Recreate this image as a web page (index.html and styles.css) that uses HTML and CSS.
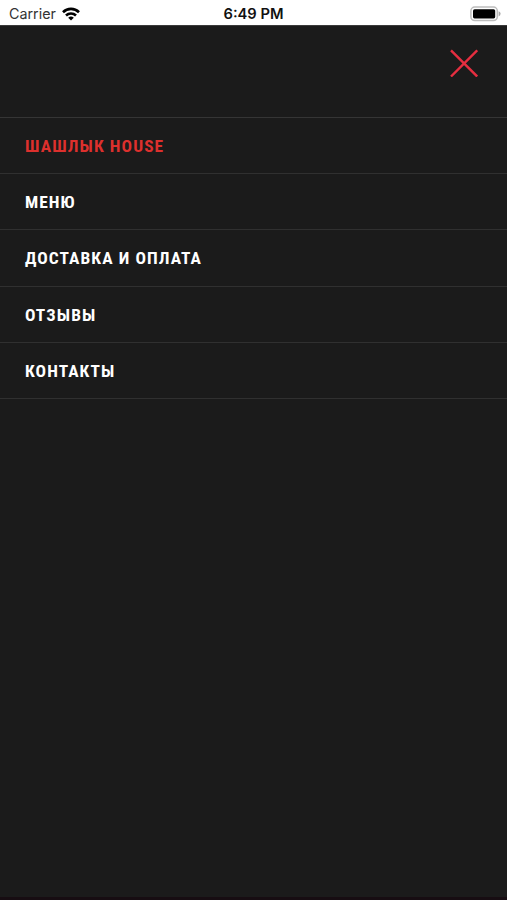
FILE: index.html
```html
<!DOCTYPE html>
<html lang="ru">
<head>
    <meta charset="UTF-8">
    <meta name="viewport" content="width=device-width, initial-scale=1.0">
    <title>Шашлык House</title>
    <link rel="stylesheet" href="styles.css">
</head>
<body>
    <div class="status-bar">
        <div class="carrier">
            <span>Carrier</span>
            <svg class="wifi" width="18" height="14" viewBox="0 0 18 14">
                <g fill="none" stroke="#000" stroke-width="2.6">
                    <path d="M1 5.2 A11.4 11.4 0 0 1 17 5.2"/>
                    <path d="M4 8.5 A7.2 7.2 0 0 1 14 8.5"/>
                </g>
                <path d="M9 13.6 L6.2 10.7 A4.2 4.2 0 0 1 11.8 10.7 Z"/>
            </svg>
        </div>
        <div class="time">6:49 PM</div>
        <div class="battery">
            <svg width="31" height="16" viewBox="0 0 31 16">
                <rect x="0.9" y="1.1" width="26.4" height="13.4" rx="3.8" fill="#fff" stroke="#bdbdbd" stroke-width="1.5"/>
                <rect x="3" y="3.2" width="22.2" height="9.2" rx="1.6" fill="#000"/>
                <path d="M28.6 5.2 Q30.6 6 30.6 7.8 Q30.6 9.6 28.6 10.4 Z" fill="#aaa"/>
            </svg>
        </div>
    </div>

    <div class="menu">
        <div class="menu-header">
            <button class="close-btn" aria-label="Закрыть">
                <svg width="28" height="28" viewBox="0 0 28 28">
                    <path d="M1 1.3 L27.2 27.5 M27.2 1.3 L1 27.5" stroke="#e62e40" stroke-width="2.4"/>
                </svg>
            </button>
        </div>
        <nav class="menu-list">
            <a class="menu-item active"><span>Шашлык House</span></a>
            <a class="menu-item"><span>Меню</span></a>
            <a class="menu-item"><span>Доставка и оплата</span></a>
            <a class="menu-item"><span>Отзывы</span></a>
            <a class="menu-item"><span>Контакты</span></a>
        </nav>
    </div>
</body>
</html>
```
FILE: styles.css
```css
* {
    box-sizing: border-box;
}

body {
    margin: 0;
    height: 100vh;
    display: flex;
    flex-direction: column;
    overflow: hidden;
    background-color: #1b1b1b;
}

.status-bar {
    display: grid;
    grid-template-columns: 1fr auto 1fr;
    align-items: center;
    height: 25px;
    padding: 2px 7px 0 9px;
    background-color: #fff;
    color: #111;
    font-family: Inter, sans-serif;
    font-size: 14.3px;
}

.carrier {
    display: flex;
    align-items: center;
    gap: 6px;
    color: #333;
}

.time {
    margin-right: 2px;
    font-size: 14.7px;
    font-weight: 600;
}

.battery {
    display: flex;
    justify-content: flex-end;
    margin-right: -1px;
}

.menu {
    flex: 1;
    border-top: 1px solid #3a3a3a;
    border-bottom: 3px solid #170d12;
}

.menu-header {
    display: flex;
    justify-content: flex-end;
    height: 91px;
    padding: 23px 29px 0 0;
}

.close-btn {
    width: 28px;
    height: 28px;
    padding: 0;
    border: none;
    background: none;
}

.close-btn svg {
    display: block;
}

.menu-list {
    border-top: 1px solid #353535;
}

.menu-item {
    display: flex;
    align-items: center;
    height: 56.2px;
    padding: 1px 25px 0;
    border-bottom: 1px solid #303030;
    color: #fff;
    font-family: "Roboto Condensed", Roboto, sans-serif;
    font-size: 17.4px;
    font-weight: 700;
    font-stretch: 75%;
    letter-spacing: 1.07px;
    text-transform: uppercase;
}

.menu-item.active {
    color: #dd302d;
}
```
